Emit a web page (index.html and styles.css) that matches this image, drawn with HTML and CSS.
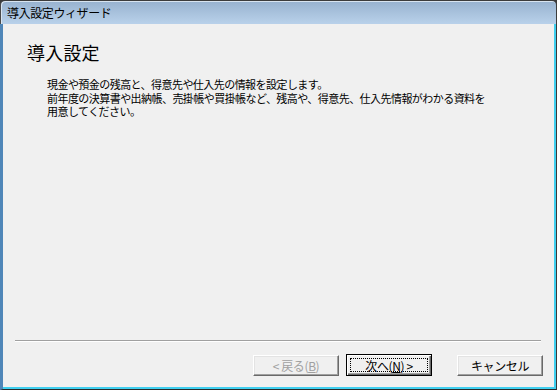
FILE: index.html
```html
<!DOCTYPE html>
<html lang="ja">
<head>
<meta charset="utf-8">
<link rel="stylesheet" href="styles.css">
</head>
<body>
<div class="window">
  <div class="titlebar">導入設定ウィザード</div>
  <div class="frame">
    <div class="content">
      <h1 class="heading">導入設定</h1>
      <div class="desc">
        <div class="line">現金や預金の残高と、得意先や仕入先の情報を設定します。</div>
        <div class="line">前年度の決算書や出納帳、売掛帳や買掛帳など、残高や、得意先、仕入先情報がわかる資料を</div>
        <div class="line">用意してください。</div>
      </div>
    </div>
    <div class="separator"></div>
    <div class="buttons">
      <button class="btn disabled">&lt; 戻る(<u>B</u>)</button>
      <button class="btn default"><span class="focus">次へ(<u>N</u>) &gt;</span></button>
      <button class="btn cancel">キャンセル</button>
    </div>
  </div>
</div>
</body>
</html>
```
FILE: styles.css
```css
html, body {
  margin: 0;
  padding: 0;
  background: #f0f0f0;
}
body {
  font-family: "Noto Sans CJK JP", "Noto Sans", sans-serif;
  font-size: 12px;
  color: #000;
}
.window {
  width: 557px;
  height: 390px;
  display: flex;
  flex-direction: column;
  box-sizing: border-box;
  background: #3a3a3a;
}
.titlebar {
  border-top: 1px solid #3c3c3c;
  border-left: 1px solid #4a4a4a;
  border-right: 1px solid #3c3c3c;
  border-radius: 5px 5px 0 0;
  background: linear-gradient(#97b2cf, #b9d1ea);
  box-shadow: inset 1px 1px 0 #d8e4f0;
  padding-left: 6px;
  line-height: 24px;
  font-size: 12px;
  letter-spacing: -0.4px;
  white-space: nowrap;
  box-sizing: content-box;
  height: 23px;
}
.frame {
  flex: 1;
  display: flex;
  flex-direction: column;
  background: #f0f0f0;
  border-left: 3px solid #4f86b8;
  border-right: 1px solid #3a3a3a;
  border-bottom: 1px solid #2a2a2a;
  box-shadow: inset -2px -2px 0 #3fcfef;
  padding-right: 2px;
  padding-bottom: 2px;
}
.content {
  flex: 1;
  padding: 16px 0 0 24px;
}
.heading {
  margin: 0;
  font-size: 18px;
  font-weight: normal;
  line-height: 24px;
  letter-spacing: 0.2px;
}
.desc {
  margin: 14px 0 0 20px;
  font-size: 11px;
  letter-spacing: -0.55px;
  white-space: nowrap;
}
.line {
  height: 13.5px;
  line-height: 13px;
}
.separator {
  margin: 0 13px 0 12px;
  height: 1px;
  background: #a0a0a0;
  border-bottom: 1px solid #ffffff;
}
.buttons {
  display: flex;
  justify-content: flex-end;
  align-items: center;
  margin: 12px 11px 11px 0;
}
.btn {
  width: 86px;
  height: 21px;
  padding: 0;
  margin: 0;
  font-family: "Noto Sans CJK JP", "Noto Sans", sans-serif;
  font-size: 12px;
  letter-spacing: -0.4px;
  line-height: 17px;
  color: #000;
  background: #f0f0f0;
  border: 1px solid;
  border-color: #ffffff #696969 #696969 #ffffff;
  box-shadow: inset -1px -1px 0 #a0a0a0, inset 1px 1px 0 #e3e3e3;
  box-sizing: border-box;
  display: flex;
  align-items: center;
  justify-content: center;
}
.btn u {
  text-decoration: underline;
  text-underline-offset: 1px;
}
.disabled {
  color: #a0a0a0;
  margin-right: 7px;
}
.default {
  height: 22px;
  border: 1px solid #000;
  box-shadow: inset 1px 1px 0 #ffffff, inset -1px -1px 0 #696969, inset -2px -2px 0 #a0a0a0;
  margin-right: 25px;
  padding: 3px;
}
.focus {
  flex: 1;
  align-self: stretch;
  display: flex;
  align-items: center;
  justify-content: center;
  outline: 1px dotted #000;
  outline-offset: -1px;
}
```
